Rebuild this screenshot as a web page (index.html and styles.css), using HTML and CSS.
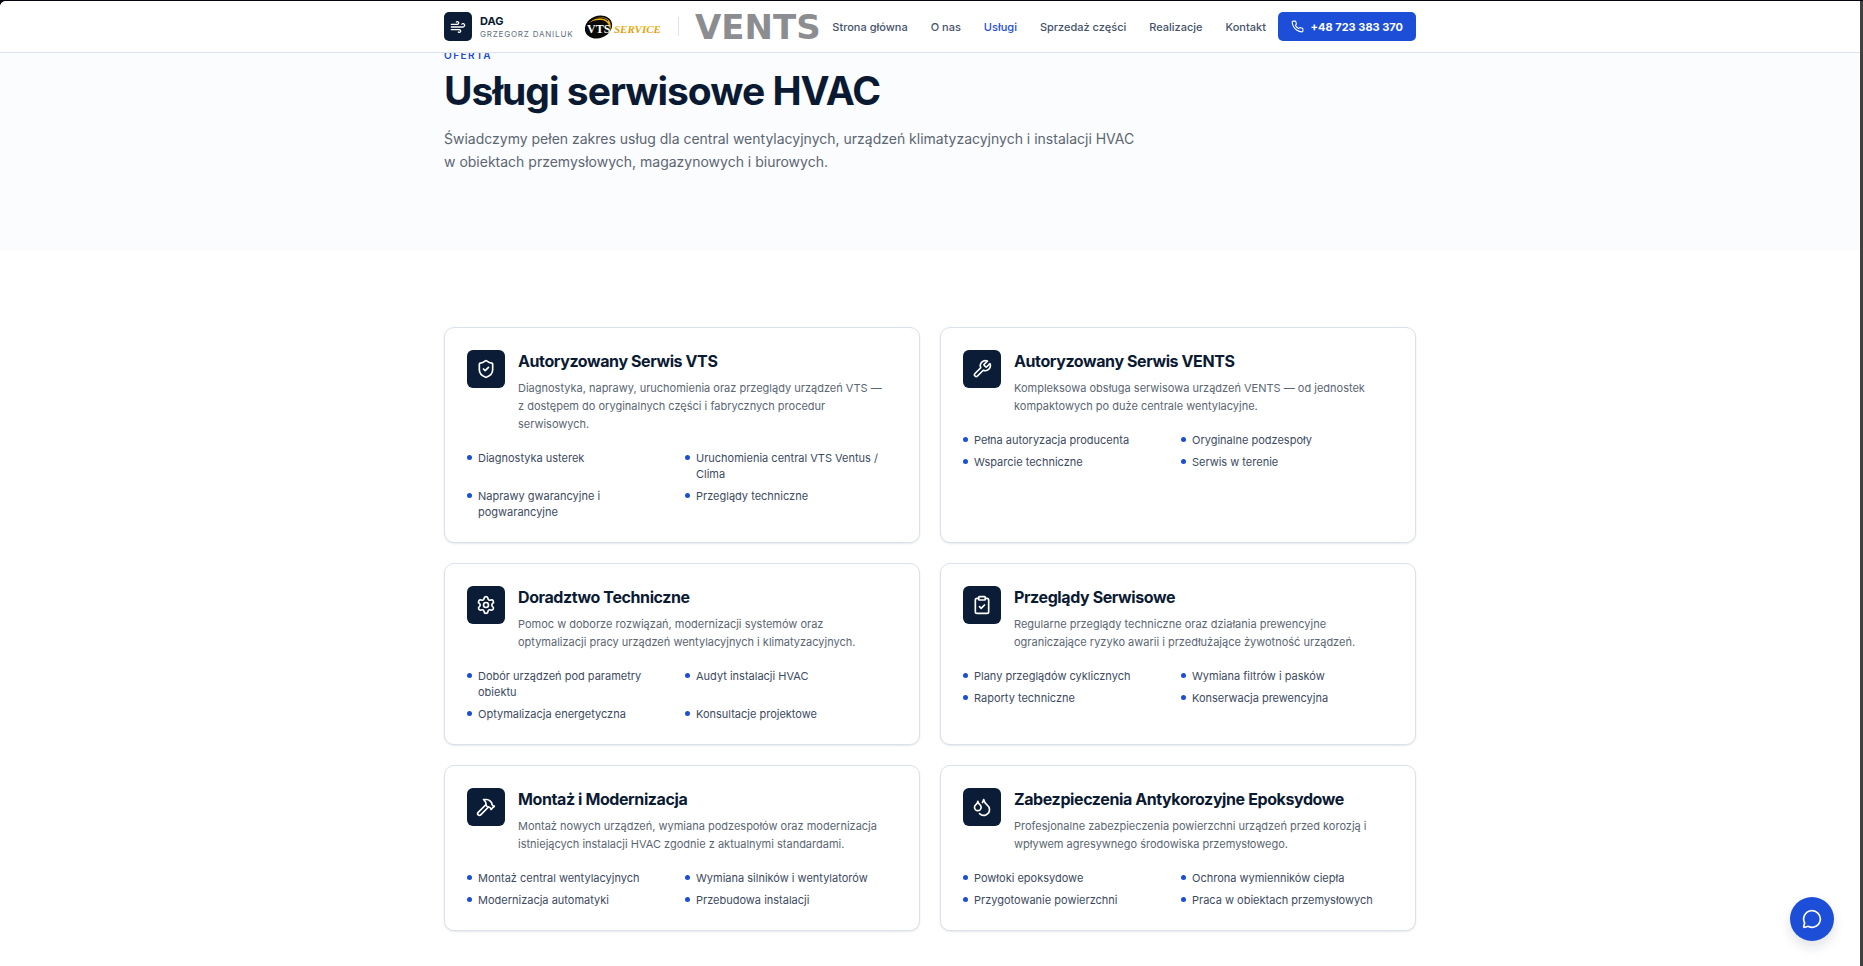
FILE: index.html
```html
<!DOCTYPE html>
<html lang="pl">
  <head>
    <meta charset="UTF-8" />
    <meta name="viewport" content="width=device-width, initial-scale=1.0" />
    <title>Usługi serwisowe HVAC</title>
    <link rel="stylesheet" href="styles.css">
  </head>
  <body>
    <div class="page">
      <header class="header">
        <div class="container header-row">
          <a class="brand" href="#">
            <span class="brand-icon">
              <svg class="icon icon-small" viewBox="0 0 24 24"><path d="M17.7 7.7a2.5 2.5 0 1 1 1.8 4.3H2"/><path d="M9.6 4.6A2 2 0 1 1 11 8H2"/><path d="M12.6 19.4A2 2 0 1 0 14 16H2"/></svg>
            </span>
            <span class="brand-text">
              <span class="brand-name">DAG</span>
              <span class="brand-owner">GRZEGORZ DANILUK</span>
            </span>
          </a>
          <div class="partners">
            <svg class="vts-logo" viewBox="0 0 77 24">
              <defs>
                <linearGradient id="gold" x1="0" y1="0" x2="0" y2="1">
                  <stop offset="0" stop-color="#f2c21a"/>
                  <stop offset="1" stop-color="#dc8f06"/>
                </linearGradient>
              </defs>
              <ellipse cx="13.5" cy="12" rx="14" ry="11" transform="rotate(-22 13.5 12)" fill="#0b0a08"/>
              <path d="M4 8C9 1.500 20 0 24 5.500C26 8.500 26.500 12 25 15.500C25 10 22 5.500 16 5C11 4.600 7 6 4 8Z" fill="#e9ae14"/>
              <path d="M5 6.500C10 2 19 1.500 23 6" fill="none" stroke="#0b0a08" stroke-width="1"/>
              <text class="vts-text" x="2" y="18">VTS</text>
              <text class="service-text" x="29" y="18">SERVICE</text>
            </svg>
            <span class="divider"></span>
            <span class="vents-logo">VENTS</span>
          </div>
          <nav class="nav">
            <a href="#">Strona główna</a>
            <a href="#">O nas</a>
            <a class="active" href="#">Usługi</a>
            <a href="#">Sprzedaż części</a>
            <a href="#">Realizacje</a>
            <a href="#">Kontakt</a>
          </nav>
          <a class="phone" href="tel:+48723383370">
            <svg class="icon icon-phone" viewBox="0 0 24 24"><path d="M22 16.920v3a2 2 0 0 1-2.180 2 19.790 19.790 0 0 1-8.630-3.070 19.500 19.500 0 0 1-6-6 19.790 19.790 0 0 1-3.070-8.670A2 2 0 0 1 4.110 2h3a2 2 0 0 1 2 1.720 12.840 12.840 0 0 0 .7 2.810 2 2 0 0 1-.45 2.110L8.090 9.910a16 16 0 0 0 6 6l1.270-1.270a2 2 0 0 1 2.110-.45 12.840 12.840 0 0 0 2.810.7A2 2 0 0 1 22 16.920z"/></svg>
            +48 723 383 370
          </a>
        </div>
      </header>

      <section class="hero">
        <div class="container">
          <p class="eyebrow">OFERTA</p>
          <h1 class="hero-title">Usługi serwisowe HVAC</h1>
          <p class="hero-text">Świadczymy pełen zakres usług dla central wentylacyjnych, urządzeń klimatyzacyjnych i instalacji HVAC w&nbsp;obiektach przemysłowych, magazynowych i biurowych.</p>
        </div>
      </section>

      <main class="container services">
        <article class="card">
          <div class="card-head">
            <span class="card-icon">
              <svg class="icon" viewBox="0 0 24 24"><path d="M20 13c0 5-3.500 7.500-7.660 8.950a1 1 0 0 1-.67-.01C7.500 20.500 4 18 4 13V6a1 1 0 0 1 1-1c2 0 4.500-1.200 6.240-2.720a1.170 1.170 0 0 1 1.520 0C14.510 3.810 17 5 19 5a1 1 0 0 1 1 1z"/><path d="m9 12 2 2 4-4"/></svg>
            </span>
            <div>
              <h2 class="card-title">Autoryzowany Serwis VTS</h2>
              <p class="card-text">Diagnostyka, naprawy, uruchomienia oraz przeglądy urządzeń VTS — z&nbsp;dostępem do oryginalnych części i fabrycznych procedur serwisowych.</p>
            </div>
          </div>
          <ul class="features">
            <li>Diagnostyka usterek</li>
            <li>Uruchomienia central VTS Ventus / Clima</li>
            <li>Naprawy gwarancyjne i pogwarancyjne</li>
            <li>Przeglądy techniczne</li>
          </ul>
        </article>

        <article class="card">
          <div class="card-head">
            <span class="card-icon">
              <svg class="icon" viewBox="0 0 24 24"><path d="M14.700 6.300a1 1 0 0 0 0 1.400l1.600 1.600a1 1 0 0 0 1.400 0l3.770-3.770a6 6 0 0 1-7.940 7.940l-6.910 6.910a2.120 2.120 0 0 1-3-3l6.910-6.910a6 6 0 0 1 7.940-7.940l-3.760 3.760z"/></svg>
            </span>
            <div>
              <h2 class="card-title">Autoryzowany Serwis VENTS</h2>
              <p class="card-text">Kompleksowa obsługa serwisowa urządzeń VENTS — od jednostek kompaktowych po duże centrale wentylacyjne.</p>
            </div>
          </div>
          <ul class="features">
            <li>Pełna autoryzacja producenta</li>
            <li>Oryginalne podzespoły</li>
            <li>Wsparcie techniczne</li>
            <li>Serwis w terenie</li>
          </ul>
        </article>

        <article class="card">
          <div class="card-head">
            <span class="card-icon">
              <svg class="icon" viewBox="0 0 24 24"><path d="M9.671 4.136a2.340 2.340 0 0 1 4.659 0 2.340 2.340 0 0 0 3.319 1.915 2.340 2.340 0 0 1 2.330 4.033 2.340 2.340 0 0 0 0 3.831 2.340 2.340 0 0 1-2.330 4.033 2.340 2.340 0 0 0-3.319 1.915 2.340 2.340 0 0 1-4.659 0 2.340 2.340 0 0 0-3.320-1.915 2.340 2.340 0 0 1-2.330-4.033 2.340 2.340 0 0 0 0-3.831A2.340 2.340 0 0 1 6.350 6.051a2.340 2.340 0 0 0 3.319-1.915"/><circle cx="12" cy="12" r="3"/></svg>
            </span>
            <div>
              <h2 class="card-title">Doradztwo Techniczne</h2>
              <p class="card-text">Pomoc w doborze rozwiązań, modernizacji systemów oraz optymalizacji pracy urządzeń wentylacyjnych i klimatyzacyjnych.</p>
            </div>
          </div>
          <ul class="features">
            <li>Dobór urządzeń pod parametry obiektu</li>
            <li>Audyt instalacji HVAC</li>
            <li>Optymalizacja energetyczna</li>
            <li>Konsultacje projektowe</li>
          </ul>
        </article>

        <article class="card">
          <div class="card-head">
            <span class="card-icon">
              <svg class="icon" viewBox="0 0 24 24"><rect x="8" y="2" width="8" height="4" rx="1"/><path d="M16 4h2a2 2 0 0 1 2 2v14a2 2 0 0 1-2 2H6a2 2 0 0 1-2-2V6a2 2 0 0 1 2-2h2"/><path d="m9 14 2 2 4-4"/></svg>
            </span>
            <div>
              <h2 class="card-title">Przeglądy Serwisowe</h2>
              <p class="card-text">Regularne przeglądy techniczne oraz działania prewencyjne ograniczające ryzyko awarii i przedłużające żywotność urządzeń.</p>
            </div>
          </div>
          <ul class="features">
            <li>Plany przeglądów cyklicznych</li>
            <li>Wymiana filtrów i pasków</li>
            <li>Raporty techniczne</li>
            <li>Konserwacja prewencyjna</li>
          </ul>
        </article>

        <article class="card">
          <div class="card-head">
            <span class="card-icon">
              <svg class="icon" viewBox="0 0 24 24"><path d="m15 12-9.373 9.373a1 1 0 0 1-3.001-3L12 9"/><path d="m18 15 4-4"/><path d="m21.500 11.500-1.914-1.914A2 2 0 0 1 19 8.172v-.344a2 2 0 0 0-.586-1.414l-1.657-1.657A6 6 0 0 0 12.516 3H9l1.243 1.243A6 6 0 0 1 12 8.485V10l2 2h1.172a2 2 0 0 1 1.414.586L18.500 14.500"/></svg>
            </span>
            <div>
              <h2 class="card-title">Montaż i Modernizacja</h2>
              <p class="card-text">Montaż nowych urządzeń, wymiana podzespołów oraz modernizacja istniejących instalacji HVAC zgodnie z aktualnymi standardami.</p>
            </div>
          </div>
          <ul class="features">
            <li>Montaż central wentylacyjnych</li>
            <li>Wymiana silników i wentylatorów</li>
            <li>Modernizacja automatyki</li>
            <li>Przebudowa instalacji</li>
          </ul>
        </article>

        <article class="card">
          <div class="card-head">
            <span class="card-icon">
              <svg class="icon" viewBox="0 0 24 24"><path d="M7 16.300c2.200 0 4-1.830 4-4.050 0-1.160-.57-2.260-1.710-3.190S7.290 6.750 7 5.300c-.29 1.450-1.140 2.840-2.290 3.760S3 11.100 3 12.250c0 2.220 1.800 4.050 4 4.050z"/><path d="M12.560 6.600A10.970 10.970 0 0 0 14 3.020c.5 2.500 2 4.900 4 6.500s3 3.500 3 5.500a6.980 6.980 0 0 1-11.910 4.970"/></svg>
            </span>
            <div>
              <h2 class="card-title">Zabezpieczenia Antykorozyjne Epoksydowe</h2>
              <p class="card-text">Profesjonalne zabezpieczenia powierzchni urządzeń przed korozją i wpływem agresywnego środowiska przemysłowego.</p>
            </div>
          </div>
          <ul class="features">
            <li>Powłoki epoksydowe</li>
            <li>Ochrona wymienników ciepła</li>
            <li>Przygotowanie powierzchni</li>
            <li>Praca w obiektach przemysłowych</li>
          </ul>
        </article>
      </main>
    </div>

    <button class="chat" type="button" aria-label="Czat">
      <svg class="icon" viewBox="0 0 24 24"><path d="M2.992 16.342a2 2 0 0 1 .094 1.167l-1.065 3.290a1 1 0 0 0 1.236 1.168l3.413-.998a2 2 0 0 1 1.099.092 10 10 0 1 0-4.777-4.719"/></svg>
    </button>
  </body>
</html>
```

FILE: styles.css
```css
* {
  box-sizing: border-box;
}

html {
  background: #05030d;
}

body {
  margin: 0;
  font-family: Inter, "Liberation Sans", sans-serif;
  font-size: 11px;
  line-height: 16px;
  color: #0b1a33;
}

h1,
h2,
p,
ul {
  margin: 0;
  padding: 0;
}

a {
  color: inherit;
  text-decoration: none;
}

.page {
  margin-top: 1px;
  min-height: calc(100vh - 1px);
  background: #fff;
  border-right: 3px solid #404040;
  border-top-left-radius: 6px;
  overflow: clip;
}

.container {
  max-width: 1024px;
  margin: 0 auto;
  padding: 0 26px;
}

.icon {
  width: 20px;
  height: 20px;
  fill: none;
  stroke: currentColor;
  stroke-width: 2;
  stroke-linecap: round;
  stroke-linejoin: round;
}
.icon-small {
  width: 16px;
  height: 16px;
}
.icon-phone {
  width: 13px;
  height: 13px;
}

/* header */
.header {
  position: sticky;
  top: 0;
  z-index: 10;
  background: #fff;
  border-bottom: 1px solid #dbe3ec;
}

.header-row {
  display: flex;
  align-items: center;
  justify-content: space-between;
  height: 51px;
}

.brand {
  display: flex;
  align-items: center;
  gap: 8px;
}

.brand-icon {
  display: flex;
  align-items: center;
  justify-content: center;
  width: 28px;
  height: 29px;
  border-radius: 5px;
  background: #0a1c36;
  color: #fff;
}

.brand-text {
  display: flex;
  flex-direction: column;
  gap: 2px;
  padding-top: 2px;
  line-height: 11px;
}

.brand-name {
  font-weight: 700;
}

.brand-owner {
  font-size: 8px;
  letter-spacing: 0.1em;
  color: #64707d;
}

.partners {
  display: flex;
  align-items: center;
  gap: 16px;
}

.vts-logo {
  width: 77px;
  height: 24px;
}

.vts-text {
  font: bold 12px "Liberation Serif", serif;
  fill: #fff;
}

.service-text {
  font: italic bold 11px "Liberation Serif", serif;
  fill: url(#gold);
}

.divider {
  width: 1px;
  height: 19px;
  background: #dbe3ec;
}

.vents-logo {
  font: bold 34px/32px "DejaVu Sans", sans-serif;
  color: #8c8d90;
}

.nav {
  display: flex;
  gap: 23px;
  font-weight: 500;
  color: #46536a;
}
.nav .active {
  color: #1d4ed8;
}

.phone {
  display: flex;
  align-items: center;
  gap: 7px;
  height: 29px;
  padding: 0 13px;
  border-radius: 5px;
  background: #1d4ed8;
  color: #fff;
  font-weight: 700;
}

/* hero, the eyebrow slides under the header */
.hero {
  margin-top: -5px;
  padding-bottom: 77px;
  background: #fbfcfe;
}

.eyebrow {
  font-size: 10px;
  line-height: 14px;
  font-weight: 600;
  letter-spacing: 0.15em;
  color: #1d4ed8;
}

.hero-title {
  margin-top: 9px;
  font-size: 39px;
  line-height: 40px;
  font-weight: 700;
  letter-spacing: -0.025em;
}

.hero-text {
  max-width: 717px;
  margin-top: 16px;
  font-size: 14px;
  line-height: 23px;
  color: #5b6671;
}

/* services */
.services {
  display: grid;
  grid-template-columns: 1fr 1fr;
  gap: 20px;
  padding-top: 77px;
  padding-bottom: 24px;
}

.card {
  padding: 22px;
  border: 1px solid #dbe1ea;
  border-radius: 10px;
  background: #fff;
  box-shadow: 0 1px 2px rgba(11, 26, 51, 0.1);
}

.card-head {
  display: flex;
  gap: 13px;
}

.card-icon {
  display: flex;
  flex-shrink: 0;
  align-items: center;
  justify-content: center;
  width: 38px;
  height: 38px;
  border-radius: 6px;
  background: #0a1c36;
  color: #fff;
}

.card-title {
  font-size: 16px;
  line-height: 23px;
  font-weight: 700;
  letter-spacing: -0.025em;
}

.card-text {
  max-width: 372px;
  margin-top: 6px;
  line-height: 18px;
  color: #5b6671;
}

.features {
  display: grid;
  grid-template-columns: 1fr 1fr;
  gap: 6px;
  margin-top: 17px;
  list-style: none;
  color: #3d4a60;
}
.features li {
  display: flex;
  gap: 6px;
}
.features li::before {
  content: "";
  flex-shrink: 0;
  width: 5px;
  height: 5px;
  margin-top: 5px;
  border-radius: 50%;
  background: #1d4ed8;
}

.chat {
  position: fixed;
  right: 29px;
  bottom: 25px;
  display: flex;
  align-items: center;
  justify-content: center;
  width: 44px;
  height: 44px;
  padding: 0;
  border: none;
  border-radius: 50%;
  background: #1d4ed8;
  color: #fff;
  box-shadow: 0 6px 12px rgba(11, 26, 51, 0.12);
}
```
